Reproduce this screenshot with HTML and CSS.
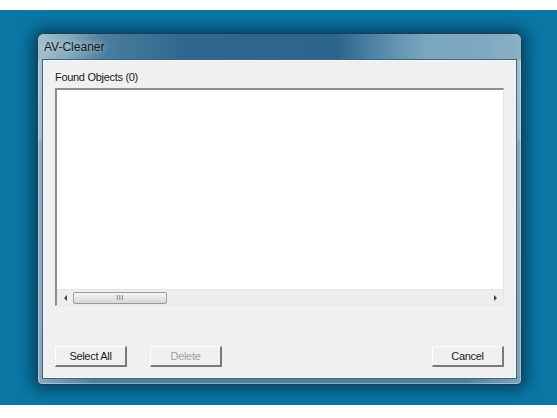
FILE: index.html
```html
<!DOCTYPE html>
<html lang="en">
<head>
    <meta charset="UTF-8">
    <title>AV-Cleaner</title>
    <link rel="stylesheet" href="styles.css">
</head>
<body>
    <div class="desktop">
        <div class="window">
            <div class="titlebar">AV-Cleaner</div>
            <div class="client">
                <div class="label">Found Objects (0)</div>
                <div class="listbox">
                    <div class="list-items"></div>
                    <div class="hscroll">
                        <span class="arrow left"></span>
                        <div class="track">
                            <div class="thumb"><span class="grip">III</span></div>
                        </div>
                        <span class="arrow right"></span>
                    </div>
                </div>
                <div class="buttons">
                    <button class="btn">Select All</button>
                    <button class="btn" disabled>Delete</button>
                    <span class="spacer"></span>
                    <button class="btn">Cancel</button>
                </div>
            </div>
        </div>
    </div>
</body>
</html>
```

FILE: styles.css
```css
body {
    margin: 0;
    background: #ffffff;
    font-family: "Liberation Sans", Arial, sans-serif;
}
.desktop {
    margin-top: 10px;
    height: 395px;
    box-sizing: border-box;
    padding: 23px 0 0 37px;
    background: #0a77a4;
}
.window {
    width: 485px;
    height: 352px;
    box-sizing: border-box;
    border: 1px solid #1d3c52;
    border-radius: 7px 7px 5px 5px;
    padding: 0 5px 6px 5px;
    display: flex;
    flex-direction: column;
    background:
        linear-gradient(90deg, rgba(180, 205, 220, 0.55) 0%, rgba(180, 205, 220, 0) 12%, rgba(0, 0, 0, 0) 88%, rgba(170, 200, 215, 0.5) 100%),
        linear-gradient(180deg, #9fbccd 0%, #87a9be 30%, #5f8aa7 31%, #4f7f9e 100%);
    box-shadow: 0 0 16px 4px rgba(0, 20, 40, 0.6), inset 0 0 0 1px rgba(255, 255, 255, 0.35);
}
.titlebar {
    height: 26px;
    flex: none;
    margin: 0 -5px;
    padding-left: 6px;
    line-height: 26px;
    font-size: 12px;
    color: #101820;
    border-radius: 6px 6px 0 0;
    background: linear-gradient(90deg, #a2c0d0 0%, #86a9bd 6%, #4a7d9e 14%, #2f678e 30%, #2c658c 62%, #5a8dac 72%, #7aa6be 80%, #7ea8bf 92%, #8db1c5 100%);
    text-shadow: 0 0 6px rgba(255, 255, 255, 0.7);
}
.client {
    flex: 1;
    display: flex;
    flex-direction: column;
    background: #f0f0f0;
    border: 1px solid #f4f8fa;
    box-shadow: 0 0 0 1px #3b6581;
    padding: 9px 11px 10px 11px;
    font-size: 11px;
    color: #1a1a1a;
    letter-spacing: -0.3px;
}
.label {
    line-height: 14px;
    margin-bottom: 4px;
}
.listbox {
    height: 218px;
    box-sizing: border-box;
    border-top: 2px solid #8e8e8e;
    border-left: 2px solid #8e8e8e;
    border-right: 1px solid #e6e6e6;
    border-bottom: 1px solid #e6e6e6;
    background: #ffffff;
    display: flex;
    flex-direction: column;
}
.list-items {
    flex: 1;
}
.hscroll {
    height: 15px;
    display: flex;
    align-items: center;
    background: #eeeeee;
    border-top: 1px solid #e2e2e2;
}
.arrow {
    width: 16px;
    display: flex;
    justify-content: center;
}
.arrow::before {
    content: "";
    border-top: 3px solid transparent;
    border-bottom: 3px solid transparent;
}
.arrow.left::before {
    border-right: 3px solid #404040;
}
.arrow.right::before {
    border-left: 3px solid #404040;
}
.track {
    flex: 1;
    height: 100%;
    display: flex;
    align-items: center;
}
.thumb {
    width: 94px;
    height: 12px;
    box-sizing: border-box;
    border: 1px solid #9a9a9a;
    border-radius: 2px;
    background: linear-gradient(180deg, #f6f6f6 0%, #e6e6e6 50%, #d6d6d6 100%);
    display: flex;
    justify-content: center;
    align-items: center;
}
.grip {
    font-size: 7px;
    line-height: 8px;
    color: #555555;
    letter-spacing: 0.5px;
}
.buttons {
    margin-top: 40px;
    display: flex;
    gap: 23px;
}
.spacer {
    flex: 1;
}
.btn {
    width: 72px;
    height: 21px;
    padding: 0;
    font-family: "Liberation Sans", Arial, sans-serif;
    font-size: 11px;
    letter-spacing: -0.3px;
    color: #1a1a1a;
    background: #f0f0f0;
    border-top: 1px solid #ffffff;
    border-left: 1px solid #ffffff;
    border-right: 2px solid #7a7a7a;
    border-bottom: 2px solid #7a7a7a;
}
.btn:disabled {
    color: #a0a0a0;
}
```
